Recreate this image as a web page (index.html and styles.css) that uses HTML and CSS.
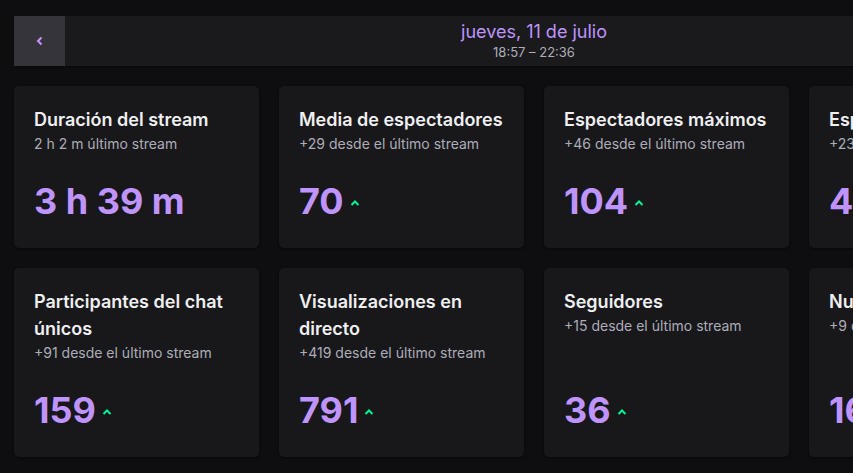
FILE: index.html
```html
<!DOCTYPE html>
<html lang="es">
<head>
    <meta charset="UTF-8">
    <meta name="viewport" content="width=device-width, initial-scale=1.0">
    <title>Resumen del stream</title>
    <link rel="stylesheet" href="styles.css">
</head>
<body>
    <div class="page">
        <div class="stream-bar">
            <button class="nav-btn" aria-label="Anterior">
                <svg width="10" height="10" viewBox="0 0 10 10"><polyline points="6.5,1.5 3,5 6.5,8.5" fill="none" stroke="#bf94ff" stroke-width="2"/></svg>
            </button>
            <div class="stream-date">
                <div class="day">jueves, 11 de julio</div>
                <div class="time">18:57 – 22:36</div>
            </div>
            <button class="nav-btn" aria-label="Siguiente">
                <svg width="10" height="10" viewBox="0 0 10 10"><polyline points="3.5,1.5 7,5 3.5,8.5" fill="none" stroke="#bf94ff" stroke-width="2"/></svg>
            </button>
        </div>

        <div class="stats">
            <div class="card">
                <div class="card-title">Duración del stream</div>
                <div class="card-sub">2 h 2 m último stream</div>
                <div class="card-value"><span>3 h 39 m</span></div>
            </div>
            <div class="card">
                <div class="card-title">Media de espectadores</div>
                <div class="card-sub">+29 desde el último stream</div>
                <div class="card-value"><span>70</span><svg class="up" width="10" height="6" viewBox="0 0 10 6"><polyline points="1.5,5 5,1.5 8.5,5" fill="none" stroke="#00f593" stroke-width="2"/></svg></div>
            </div>
            <div class="card">
                <div class="card-title">Espectadores máximos</div>
                <div class="card-sub">+46 desde el último stream</div>
                <div class="card-value"><span>104</span><svg class="up" width="10" height="6" viewBox="0 0 10 6"><polyline points="1.5,5 5,1.5 8.5,5" fill="none" stroke="#00f593" stroke-width="2"/></svg></div>
            </div>
            <div class="card">
                <div class="card-title">Espectadores únicos</div>
                <div class="card-sub">+23 desde el último stream</div>
                <div class="card-value"><span>431</span><svg class="up" width="10" height="6" viewBox="0 0 10 6"><polyline points="1.5,5 5,1.5 8.5,5" fill="none" stroke="#00f593" stroke-width="2"/></svg></div>
            </div>

            <div class="card">
                <div class="card-title">Participantes del chat únicos</div>
                <div class="card-sub">+91 desde el último stream</div>
                <div class="card-value"><span>159</span><svg class="up" width="10" height="6" viewBox="0 0 10 6"><polyline points="1.5,5 5,1.5 8.5,5" fill="none" stroke="#00f593" stroke-width="2"/></svg></div>
            </div>
            <div class="card">
                <div class="card-title">Visualizaciones en directo</div>
                <div class="card-sub">+419 desde el último stream</div>
                <div class="card-value"><span>791</span><svg class="up" width="10" height="6" viewBox="0 0 10 6"><polyline points="1.5,5 5,1.5 8.5,5" fill="none" stroke="#00f593" stroke-width="2"/></svg></div>
            </div>
            <div class="card">
                <div class="card-title">Seguidores</div>
                <div class="card-sub">+15 desde el último stream</div>
                <div class="card-value"><span>36</span><svg class="up" width="10" height="6" viewBox="0 0 10 6"><polyline points="1.5,5 5,1.5 8.5,5" fill="none" stroke="#00f593" stroke-width="2"/></svg></div>
            </div>
            <div class="card">
                <div class="card-title">Nuevos suscriptores</div>
                <div class="card-sub">+9 desde el último stream</div>
                <div class="card-value"><span>16</span><svg class="up" width="10" height="6" viewBox="0 0 10 6"><polyline points="1.5,5 5,1.5 8.5,5" fill="none" stroke="#00f593" stroke-width="2"/></svg></div>
            </div>
        </div>
    </div>
</body>
</html>
```

FILE: styles.css
```css
html, body { margin: 0; overflow: hidden; }
body { background-color: #0e0e10; color: #efeff1; font-family: Inter, "Noto Sans", sans-serif; }
.page { width: 1040px; padding: 16px 14px; }

.stream-bar { display: flex; align-items: stretch; height: 50px; background-color: #1a1a1d; box-shadow: 0 1px 2px rgba(0, 0, 0, 0.5); }
.nav-btn { width: 51px; border: none; padding: 0; background-color: #35343b; display: flex; align-items: center; justify-content: center; cursor: pointer; }
.stream-date { flex: 1; display: flex; flex-direction: column; align-items: center; justify-content: center; }
.stream-date .day { color: #bf94ff; font-size: 18px; line-height: 22px; }
.stream-date .time { color: #adadb8; font-size: 13px; line-height: 17px; margin-top: 1px; }

.stats { display: grid; grid-template-columns: repeat(4, 245px); gap: 20px; margin-top: 20px; }
.card { background-color: #18181b; border-radius: 5px; padding: 20px; display: flex; flex-direction: column; box-shadow: 0 1px 3px rgba(0, 0, 0, 0.5); }
.card-title { font-size: 18px; font-weight: 600; line-height: 27px; }
.card-sub { color: #adadb8; font-size: 14px; line-height: 21px; }
.card-value { margin-top: auto; padding-top: 20px; display: flex; align-items: baseline; gap: 6px; color: #bf94ff; font-size: 36px; font-weight: 700; line-height: 54px; }
.card-value .up { position: relative; top: -8px; }
```
